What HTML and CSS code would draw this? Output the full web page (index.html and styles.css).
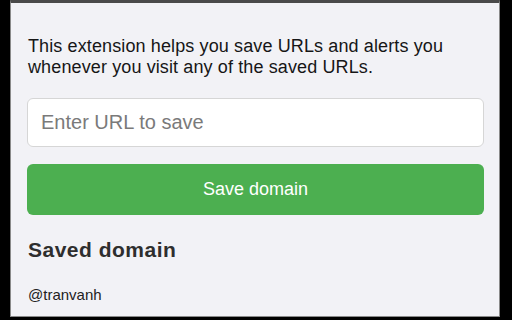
FILE: index.html
```html
<!DOCTYPE html>
<html>
<head>
<meta charset="utf-8">
<link rel="stylesheet" href="styles.css">
</head>
<body>
<div class="window">
  <div class="popup">
    <p class="intro">This extension helps you save URLs and alerts you whenever you visit any of the saved URLs.</p>
    <input class="url-input" type="text" placeholder="Enter URL to save">
    <button class="save-btn">Save domain</button>
    <h2 class="saved-title">Saved domain</h2>
    <div class="saved-item">@tranvanh</div>
  </div>
</div>
</body>
</html>
```
FILE: styles.css
```css
html, body {
  margin: 0;
  padding: 0;
  background: #000;
  width: 512px;
  height: 320px;
  overflow: hidden;
}
.window {
  margin-left: 10px;
  width: 488px;
  height: 313px;
  background: #f2f2f6;
  border-top: 3px solid #4a4a4a;
  border-left: 1px solid #8a8a8a;
  border-right: 1px solid #8a8a8a;
  border-bottom: 1px solid #8a8a8a;
  font-family: "Liberation Sans", Arial, sans-serif;
}
.popup {
  padding: 33px 15px 0 16px;
  display: flex;
  flex-direction: column;
}
.intro {
  margin: 0 0 0 1px;
  font-size: 18px;
  line-height: 21px;
  letter-spacing: 0.12px;
  color: #161616;
}
.url-input {
  margin-top: 20px;
  height: 49px;
  box-sizing: border-box;
  border: 1px solid #d6d6d6;
  border-radius: 6px;
  background: #fff;
  padding: 0 13px;
  font-family: inherit;
  font-size: 20px;
  color: #333;
}
.url-input::placeholder {
  color: #7a7a7a;
}
.save-btn {
  margin-top: 17px;
  height: 51px;
  border: none;
  border-radius: 6px;
  background: #4caf50;
  color: #fff;
  font-family: inherit;
  font-size: 18px;
}
.saved-title {
  margin: 23px 0 0 1px;
  font-size: 21px;
  line-height: 24px;
  letter-spacing: 0.5px;
  font-weight: bold;
  color: #2e2e2e;
}
.saved-item {
  margin: 24px 0 0 1px;
  font-size: 15px;
  line-height: 17px;
  color: #222;
}
```
